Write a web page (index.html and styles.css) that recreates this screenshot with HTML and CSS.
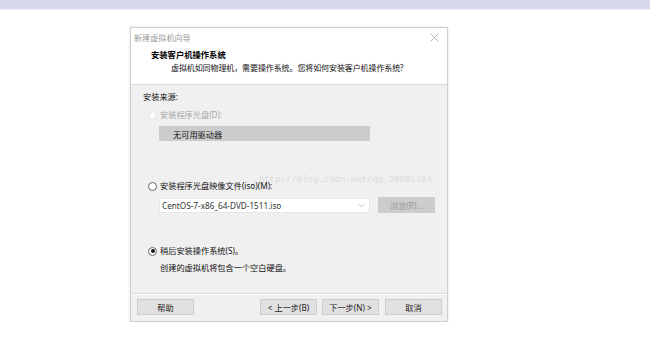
FILE: index.html
```html
<!DOCTYPE html>
<html lang="zh-CN">
<head>
<meta charset="utf-8">
<link rel="stylesheet" href="styles.css">
<title>新建虚拟机向导</title>
</head>
<body>
<div class="topbar"></div>
<div class="stage">
  <div class="dialog">
    <div class="titlebar">
      <span class="title">新建虚拟机向导</span>
      <svg class="close" width="9" height="9" viewBox="0 0 9 9"><path d="M0.5 0.5L8.5 8.5M8.5 0.5L0.5 8.5" stroke="#b5b5b5" stroke-width="1" fill="none"/></svg>
    </div>
    <div class="header">
      <div class="h-title">安装客户机操作系统</div>
      <div class="h-sub">虚拟机如同物理机，需要操作系统。您将如何安装客户机操作系统?</div>
    </div>
    <div class="body">
      <div class="watermark">http://blog.csdn.net/qq_30591494</div>
      <div class="section">安装来源:</div>
      <div class="radio-row r1 disabled"><span class="radio"></span><span>安装程序光盘(D):</span></div>
      <div class="select disabled-select"><span>无可用驱动器</span><svg class="chev" width="7" height="5" viewBox="0 0 7 5"><path d="M0.5 1L3.5 4L6.5 1" stroke="#c0c0c0" fill="none"/></svg></div>
      <div class="radio-row r2"><span class="radio"></span><span>安装程序光盘映像文件(iso)(M):</span></div>
      <div class="combo-row">
        <div class="select combo"><span>CentOS-7-x86_64-DVD-1511.iso</span><svg class="chev" width="7" height="5" viewBox="0 0 7 5"><path d="M0.5 1L3.5 4L6.5 1" stroke="#c8c8c8" fill="none"/></svg></div>
        <div class="btn btn-disabled">浏览(R)...</div>
      </div>
      <div class="radio-row r3"><span class="radio checked"></span><span>稍后安装操作系统(S)。</span></div>
      <div class="note">创建的虚拟机将包含一个空白硬盘。</div>
    </div>
    <div class="footer">
      <div class="btn">帮助</div>
      <div class="spacer"></div>
      <div class="btn">&lt; 上一步(B)</div>
      <div class="btn">下一步(N) &gt;</div>
      <div class="btn cancel">取消</div>
    </div>
  </div>
</div>
</body>
</html>
```
FILE: styles.css
```css
html, body {
  margin: 0;
  padding: 0;
  background: #ffffff;
  font-family: "Noto Sans", "Noto Sans CJK SC", sans-serif;
  font-size: 8.2px;
  color: #111;
}
.topbar {
  height: 9px;
  background: #d5d9eb;
  border-bottom: 1px solid #eef3f9;
}
.stage {
  padding-top: 17px;
  padding-left: 130px;
}
.dialog {
  width: 316px;
  border: 1px solid #cfcfcf;
  box-shadow: 0 0 3px rgba(0,0,0,0.12);
  background: #f0f0f0;
  display: flex;
  flex-direction: column;
}
.titlebar {
  height: 19px;
  background: #fff;
  display: flex;
  align-items: center;
  justify-content: space-between;
  padding: 0 8px 0 3px;
}
.title {
  color: #9a9a9a;
  font-size: 8.1px;
}
.close { display: block; }
.header {
  background: #fff;
  height: 38px;
  border-bottom: 1px solid #dadada;
  box-sizing: border-box;
  padding-top: 1px;
}
.h-title {
  font-weight: bold;
  padding-left: 20px;
  line-height: 13px;
  font-size: 8.3px;
  color: #000;
}
.h-sub {
  padding-left: 40px;
  line-height: 13px;
  font-size: 8px;
  letter-spacing: -0.1px;
  color: #111;
}
.body {
  position: relative;
  height: 209px;
  padding: 6px 0 0 12px;
  box-sizing: border-box;
  border-bottom: 1px solid #dcdcdc;
}
.watermark {
  position: absolute;
  left: 128px;
  top: 90px;
  font-family: "Liberation Mono", monospace;
  font-size: 9px;
  color: #dadada;
  line-height: 10px;
  white-space: nowrap;
}
.section {
  line-height: 12px;
  color: #111;
}
.radio-row {
  display: flex;
  align-items: center;
  line-height: 12px;
  padding-left: 5px;
  gap: 3px;
  color: #111;
}
.radio-row.r1 { margin-top: 6px; }
.radio-row.r2 { margin-top: 39px; }
.radio-row.r3 { margin-top: 32px; }
.radio {
  width: 9px;
  height: 9px;
  border: 1px solid #666;
  border-radius: 50%;
  background: #fff;
  box-sizing: border-box;
  display: flex;
  align-items: center;
  justify-content: center;
}
.disabled { color: #a6a6a6; }
.disabled .radio { border-color: #e2e2e2; background: #fafafa; }
.radio.checked::after {
  content: "";
  width: 4px;
  height: 4px;
  border-radius: 50%;
  background: #111;
}
.select {
  display: flex;
  align-items: center;
  justify-content: space-between;
  box-sizing: border-box;
}
.disabled-select {
  margin: 5px 0 0 16px;
  width: 211px;
  height: 15px;
  background: #cccccc;
  padding: 0 5px 0 14px;
  color: #111;
}
.combo-row {
  display: flex;
  align-items: center;
  margin: 5px 0 0 16px;
  gap: 8px;
}
.combo {
  width: 211px;
  height: 15px;
  background: #fff;
  border: 1px solid #e6e6e6;
  padding: 0 4px 0 2px;
  color: #333;
}
.btn {
  height: 16px;
  width: 57px;
  box-sizing: border-box;
  background: #e1e1e1;
  border: 1px solid #cdcdcd;
  display: flex;
  align-items: center;
  justify-content: center;
  color: #222;
}
.btn-disabled {
  background: #cccccc;
  border-color: #cccccc;
  color: #9a9a9a;
}
.note {
  margin-top: 5px;
  padding-left: 17px;
  line-height: 12px;
  color: #111;
}
.footer {
  height: 27px;
  display: flex;
  align-items: center;
  padding: 0 5px 2px 6px;
  gap: 5px;
  box-sizing: border-box;
  border-top: 1px solid #fafafa;
}
.spacer { flex: 1; }
.cancel { margin-left: 1px; }
```
